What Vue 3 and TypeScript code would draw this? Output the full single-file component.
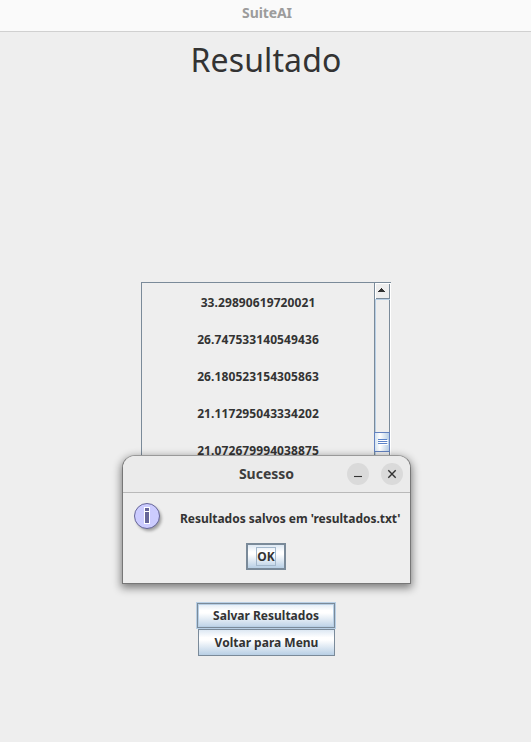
<script setup lang="ts">
import { ref } from 'vue'

const results: string[] = [
  '33.29890619720021',
  '26.747533140549436',
  '26.180523154305863',
  '21.117295043334202',
  '21.072679994038875',
]
const dialogOpen = ref(true)
</script>

<template>
  <div class="window">
    <header class="titlebar">SuiteAI</header>
    <main class="content">
      <h1><span>Resultado</span></h1>
      <section class="pane">
        <ul class="list">
          <li v-for="r in results" :key="r">{{ r }}</li>
        </ul>
        <div class="scrollbar">
          <div class="arrow">
            <svg width="9" height="5" viewBox="0 0 9 5" shape-rendering="crispEdges">
              <path d="M4 0h1v1h1v1h1v1h1v1H1V3h1V2h1V1h1z" fill="#333" />
            </svg>
          </div>
          <div class="track">
            <div class="thumb">
              <svg width="10" height="6" viewBox="0 0 10 6" shape-rendering="crispEdges">
                <path d="M0 0h9v1H0zM0 2h9v1H0zM0 4h9v1H0z" fill="#5b83c8" />
                <path d="M1 1h9v1H1zM1 3h9v1H1zM1 5h9v1H1z" fill="#fff" />
              </svg>
            </div>
          </div>
        </div>
      </section>
      <div class="actions">
        <button class="focused"><span>Salvar Resultados</span></button>
        <button><span>Voltar para Menu</span></button>
      </div>
    </main>

    <div v-if="dialogOpen" class="dialog">
      <div class="dialog-title">
        <span class="name">Sucesso</span>
        <button class="round">
          <svg width="22" height="22" viewBox="0 0 22 22"><path d="M7 13.5h8" stroke="#333" stroke-width="1.1" /></svg>
        </button>
        <button class="round" @click="dialogOpen = false">
          <svg width="22" height="22" viewBox="0 0 22 22"><path d="M7.3 7.3l7.4 7.4M14.7 7.3l-7.4 7.4" stroke="#333" stroke-width="1.4" /></svg>
        </button>
      </div>
      <div class="message">
        <svg class="info" width="32" height="32" viewBox="0 0 32 32">
          <defs>
            <filter id="soft" x="-30%" y="-30%" width="160%" height="160%"><feGaussianBlur stdDeviation="1.5" /></filter>
          </defs>
          <circle cx="15" cy="15.5" r="12.5" fill="#000" opacity=".33" filter="url(#soft)" />
          <circle cx="13" cy="13" r="12.5" fill="#ccf" stroke="#669" />
          <path d="M10 4h6v5h-6zM10 8h6v13h-6z" fill="#fff" />
          <path d="M11 5h4v3h-4zM11 9h4v11h-4z" fill="#669" />
        </svg>
        <span class="text">Resultados salvos em 'resultados.txt'</span>
      </div>
      <button class="ok" @click="dialogOpen = false"><span>OK</span></button>
    </div>
  </div>
</template>

<style>
body { background: #eee; }
</style>

<style scoped>
* { box-sizing: border-box; }
.window {
  position: relative;
  width: 531px;
  height: 742px;
  overflow: hidden;
  display: flex;
  flex-direction: column;
  background: #eee;
  color: #333;
  font: bold 12px/17px "Noto Sans", sans-serif;
}
.titlebar {
  height: 32px;
  padding-top: 3px;
  padding-left: 3px;
  border-bottom: 1px solid #d0d0d0;
  background: #fafafa;
  color: #9c9c9c;
  text-align: center;
  font: bold 14px/20px "Noto Sans", sans-serif;
  letter-spacing: -0.1px;
}
.content {
  flex: 1;
  display: flex;
  flex-direction: column;
  align-items: center;
}
h1 {
  margin: 0;
  height: 250px;
  padding-top: 5px;
  padding-left: 1px;
  font: normal 32px/45px "Noto Sans", sans-serif;
  letter-spacing: 0.1px;
}
.pane {
  width: 250px;
  height: 300px;
  margin-left: 1px;
  display: flex;
  border: 1px solid #7a8a99;
  border-right: 0;
  overflow: hidden;
}
.list {
  flex: 1;
  margin: 0;
  padding: 11px 0 0;
  list-style: none;
  text-align: center;
  display: flex;
  flex-direction: column;
  gap: 20px;
  letter-spacing: 0.09px;
}
.scrollbar {
  width: 17px;
  display: flex;
  flex-direction: column;
  border-left: 1px solid #7a8a99;
  border-right: 1px solid #fff;
}
.arrow {
  height: 16px;
  display: flex;
  padding: 4px 0 0 1px;
  border: 1px solid #fff;
  border-width: 1px 0 0 1px;
  box-shadow: inset -1px -1px #7a8a99;
}
.track {
  flex: 1;
  padding-top: 132px;
  border-top: 1px solid #b8cfe5;
  border-left: 1px solid #b8cfe5;
  box-shadow: inset -1px 0 #7a8a99;
}
.thumb {
  height: 20px;
  margin-left: -2px;
  display: flex;
  align-items: center;
  justify-content: center;
  padding-left: 1px;
  border: 1px solid #6382bf;
  background: linear-gradient(90deg, #d3e2ef, #fff 35%, #b8cfe5);
}
.actions {
  display: flex;
  flex-direction: column;
  align-items: flex-end;
  margin-top: 20px;
  margin-left: 1px;
}
button { font: inherit; color: inherit; padding: 0; margin: 0; white-space: nowrap; }
.actions button, .ok {
  width: 137px;
  height: 27px;
  border: 1px solid #7a8a99;
  background: linear-gradient(#dde8f3, #fff 30%, #fff 40%, #b8cfe5);
}
.actions button { margin-right: 1px; }
.actions .focused {
  width: 140px;
  margin-right: 0;
  border: 1px solid #b8cfe5;
  box-shadow: inset 0 0 0 1px #7a8a99, inset 0 0 0 2px #b8cfe5;
}
.dialog {
  position: absolute;
  left: 122px;
  top: 455px;
  width: 289px;
  height: 129px;
  display: flex;
  flex-direction: column;
  border: 1px solid #777;
  border-top-color: #999;
  border-radius: 13px 13px 0 0;
  background: #eee;
  box-shadow: 0 3px 8px 1px rgba(0, 0, 0, .48);
}
.dialog-title {
  height: 37px;
  display: flex;
  align-items: center;
  gap: 12px;
  padding-right: 7px;
  border-bottom: 1px solid #b9b9b9;
  border-radius: 12px 12px 0 0;
  background: #ebebeb;
  font-size: 14px;
}
.name { flex: 1; padding: 0 0 2px 75px; text-align: center; color: #3d3d3d; }
.round {
  width: 22px;
  height: 22px;
  border: 0;
  border-radius: 50%;
  background: #dadada;
}
.round svg { display: block; }
.message {
  height: 50px;
  display: flex;
  padding: 10px 0 0 11px;
}
.text { margin: 7px 0 0 14px; white-space: nowrap; letter-spacing: -0.03px; }
.ok {
  width: 40px;
  margin-left: 123px;
  border-width: 2px;
  display: flex;
  align-items: center;
  justify-content: center;
}
.ok span { width: 20px; height: 19px; line-height: 17px; border: 1px solid #a3b8cc; display: flex; justify-content: center; }
</style>
